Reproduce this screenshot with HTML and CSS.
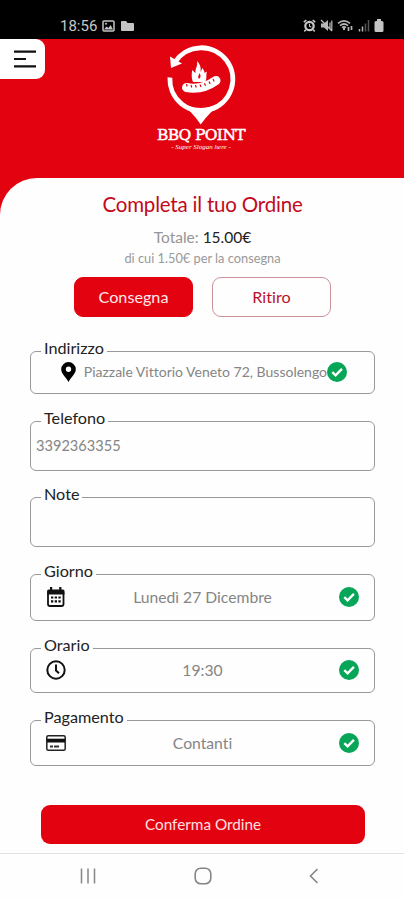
FILE: index.html
```
<!DOCTYPE html>
<html lang="it">
<head>
    <meta charset="UTF-8">
    <meta name="viewport" content="width=device-width, initial-scale=1.0">
    <title>BBQ Point - Completa il tuo Ordine</title>
    <link rel="stylesheet" href="styles.css">
</head>
<body>
    <svg class="symbols" width="0" height="0">
        <symbol id="check" viewBox="0 0 20 20">
            <circle cx="10" cy="10" r="10" fill="#06a557"/>
            <path d="M5.3 10.2l3.3 3.2 6.3-6.5" fill="none" stroke="#fff" stroke-width="2.4"/>
        </symbol>
    </svg>

    <div class="status-bar">
        <span class="clock">18:56</span>
        <svg class="status-image" width="13" height="12" viewBox="0 0 13 12">
            <rect x="1" y="1" width="11" height="10" rx="1" fill="none" stroke="#c4c4c4" stroke-width="1.5"/>
            <path d="M2 9.5l2.5-3 2 1.6 2-3L11 9.5z" fill="#c4c4c4"/>
            <circle cx="4" cy="3.7" r="1" fill="#c4c4c4"/>
        </svg>
        <svg class="status-folder" width="13" height="12" viewBox="0 0 13 12">
            <path d="M0 2q0-1 1-1h4l1.5 2H12q1 0 1 1v6q0 1-1 1H1q-1 0-1-1z" fill="#c4c4c4"/>
        </svg>
        <div class="status-right">
            <svg width="13" height="13" viewBox="0 0 13 13" fill="none" stroke="#c8c8c8">
                <circle cx="6.5" cy="7" r="4.2" stroke-width="2.2"/>
                <path d="M.8 3.2L3.3 1M12.2 3.2L9.7 1M2.8 10.8L1.3 12.4M10.2 10.8l1.5 1.6" stroke-width="1.6"/>
                <path d="M6.5 4.7V7.3l1.8 1" stroke-width="1.1"/>
            </svg>
            <svg width="13" height="13" viewBox="0 0 13 13">
                <path d="M1 4.5h3L8 1v11L4 8.5H1z" fill="#b5b5b5"/>
                <path d="M1 1l11 11M10 3.5v6M11.8 1.5v10" stroke="#c0c0c0" stroke-width="1.2"/>
            </svg>
            <svg width="17" height="13" viewBox="0 0 17 13" fill="none" stroke="#b5b5b5" stroke-width="1.7">
                <path d="M1 4.3q6-5 12 0M3 6.6q4-3.2 8 0M5 8.7q2-1.6 4 0"/>
                <path d="M7 9v2" stroke-width="2"/>
                <path d="M11.5 8v4M14.5 7v4" stroke-width="1.7"/>
            </svg>
            <svg width="12" height="13" viewBox="0 0 12 13" stroke-width="1.5">
                <path d="M1.5 10v2.5M4.5 7.5v5" stroke="#b5b5b5"/>
                <path d="M7.5 4.5v8M10.5 1v11.5" stroke="#555"/>
            </svg>
            <svg width="10" height="13" viewBox="0 0 10 13">
                <path d="M3 0h4v2h1q1.500 0 1.500 1.500v8Q9.500 13 8 13H2Q.5 13 .5 11.500v-8Q.5 2 2 2h1z" fill="#c4c4c4"/>
            </svg>
        </div>
    </div>

    <div class="hero">
        <button class="menu-button" aria-label="Menu">
            <svg width="22" height="18" viewBox="0 0 22 18" stroke="#111" stroke-width="2.2">
                <path d="M0 1.700h22M0 9h12M0 16.300h22"/>
            </svg>
        </button>
        <div class="logo">
            <svg width="72" height="82" viewBox="0 0 72 82">
                <!-- pin outline ending in an arrow -->
                <path d="M10 18A31.500 31.500 0 1 1 4.900 33.500" fill="none" stroke="#fff" stroke-width="4.800"/>
                <path d="M12 56Q35 72 60.500 56Q46 66 35.700 80.500Q26 66 12 56z" fill="#fff"/>
                <path d="M5 12.500L6 24l11-4.500z" fill="#fff"/>
                <!-- flame -->
                <path d="M28 38c-2-5-1-8-1-12l3.500 3c-.5-5 2.500-6 1.500-12 4 4 4 8 3.500 11l2-4c1 2 2 3 2 5l2.500-1.500c-1.500 4 .5 7-2 10.500z" fill="#fff"/>
                <path d="M34 35c-2-3 .5-4 .5-6 1.500 2.500 1.500 4-.5 6z" fill="#e30210"/>
                <!-- sausage -->
                <path d="M21.500 43.500Q37 46.500 51 36.500" fill="none" stroke="#fff" stroke-width="9" stroke-linecap="round"/>
                <path d="M21.500 40l.7 2.500M26 41l.7 2.500M30.500 41l.7 2.500M35 40.500l1 2.500M39.500 39.300l1 2.500M44 37.500l1.200 2.500M48 35l1.200 2.500" stroke="#e30210" stroke-width="1.200"/>
            </svg>
            <div class="logo-name">BBQ POINT</div>
            <div class="logo-slogan">- Super Slogan here -</div>
        </div>
    </div>

    <div class="sheet">
        <h1>Completa il tuo Ordine</h1>
        <p class="total">Totale: <b>15.00€</b></p>
        <p class="delivery">di cui 1.50€ per la consegna</p>

        <div class="mode-buttons">
            <button class="mode active">Consegna</button>
            <button class="mode">Ritiro</button>
        </div>

        <fieldset class="address">
            <legend>Indirizzo</legend>
            <div class="row">
                <svg width="15" height="20" viewBox="0 0 15 20">
                    <path d="M7.500 0A7.300 7.300 0 0 0 .2 7.300C.2 11.500 4 14 7.500 20 11 14 14.800 11.500 14.800 7.300A7.300 7.300 0 0 0 7.500 0zm0 4.600a2.700 2.700 0 1 1 0 5.400 2.700 2.700 0 0 1 0-5.400z" fill="#000" fill-rule="evenodd"/>
                </svg>
                <span class="value">Piazzale Vittorio Veneto 72, Bussolengo</span>
                <svg class="check"><use href="#check"/></svg>
            </div>
        </fieldset>

        <fieldset class="phone">
            <legend>Telefono</legend>
            <div class="row"><span class="value">3392363355</span></div>
        </fieldset>

        <fieldset class="note">
            <legend>Note</legend>
            <div class="row"></div>
        </fieldset>

        <fieldset class="day">
            <legend>Giorno</legend>
            <div class="row">
                <svg width="20" height="20" viewBox="0 0 20 20">
                    <path d="M2 5.500V17q0 2 2 2h11.500q2 0 2-2V5.500" fill="none" stroke="#111" stroke-width="1.800"/>
                    <path d="M1.100 7.500V4q0-1.500 1.500-1.500H4V0h2.200v2.500h7V0h2.200v2.500H17q1.500 0 1.500 1.500v3.500z" fill="#111"/>
                    <path d="M5 10.500h2.300M8.700 10.500H11M12.400 10.500h2.300M5 14.300h2.300M8.700 14.300H11M12.400 14.300h2.300" stroke="#111" stroke-width="2.200"/>
                </svg>
                <span class="value">Lunedì 27 Dicembre</span>
                <svg class="check"><use href="#check"/></svg>
            </div>
        </fieldset>

        <fieldset class="time">
            <legend>Orario</legend>
            <div class="row">
                <svg width="20" height="20" viewBox="0 0 20 20" fill="none" stroke="#111" stroke-width="2">
                    <circle cx="10" cy="10" r="8.700"/>
                    <path d="M10 4.500V10.500l3 2.800"/>
                </svg>
                <span class="value">19:30</span>
                <svg class="check"><use href="#check"/></svg>
            </div>
        </fieldset>

        <fieldset class="payment">
            <legend>Pagamento</legend>
            <div class="row">
                <svg width="20" height="16" viewBox="0 0 20 16">
                    <rect x=".8" y=".8" width="18.400" height="14.400" rx="1.500" fill="none" stroke="#222" stroke-width="1.500"/>
                    <path d="M1 5.600h18" stroke="#111" stroke-width="3.800"/>
                    <path d="M4 11.500h3M8 11.500h5" stroke="#333" stroke-width="1.800"/>
                </svg>
                <span class="value">Contanti</span>
                <svg class="check"><use href="#check"/></svg>
            </div>
        </fieldset>

        <button class="confirm">Conferma Ordine</button>
    </div>

    <div class="nav-bar">
        <svg width="16" height="16" viewBox="0 0 16 16" stroke="#858585" stroke-width="1.500">
            <path d="M1.500 0.500v15M8 .5v15M14.500 .5v15"/>
        </svg>
        <svg width="18" height="18" viewBox="0 0 18 18">
            <rect x="1.200" y="1.200" width="15.600" height="15.600" rx="5.500" fill="none" stroke="#858585" stroke-width="1.600"/>
        </svg>
        <svg width="10" height="16" viewBox="0 0 10 16">
            <path d="M8.500 1L1.500 8l7 7" fill="none" stroke="#858585" stroke-width="1.600"/>
        </svg>
    </div>
</body>
</html>
```
FILE: styles.css
```
* {
    box-sizing: border-box;
}

body {
    margin: 0;
    height: 900px;
    overflow: hidden;
    display: flex;
    flex-direction: column;
    background: #e30210;
    font-family: Lato, "Liberation Sans", sans-serif;
    font-variant-ligatures: none;
}

button {
    font-family: inherit;
    font-variant-ligatures: none;
    padding: 0;
    border: none;
}

svg {
    flex-shrink: 0;
}

.symbols {
    display: none;
}

.status-bar {
    height: 39px;
    flex-shrink: 0;
    background: #000;
    padding: 12px 20px 0 60px;
    display: flex;
    align-items: center;
}

.clock {
    width: 42px;
    color: #c8c8c8;
    font-family: Roboto, sans-serif;
    font-size: 15px;
}

.status-folder {
    margin-left: 6px;
}

.status-right {
    display: flex;
    gap: 4px;
    margin-left: auto;
}

.hero {
    height: 139px;
    flex-shrink: 0;
    display: flex;
    align-items: flex-start;
}

.menu-button {
    width: 45px;
    height: 40px;
    margin-right: 110px;
    padding: 0 9px 0 14px;
    background: #fff;
    border-radius: 0 9px 9px 0;
    display: flex;
    align-items: center;
}

.logo {
    width: 92px;
    padding-top: 5px;
    display: flex;
    flex-direction: column;
    align-items: center;
    color: #fff;
}

.logo-name {
    font-family: "DejaVu Serif", serif;
    font-size: 15.5px;
    line-height: 18px;
    letter-spacing: -0.6px;
    white-space: nowrap;
    -webkit-text-stroke: 0.5px #fff;
}

.logo-slogan {
    font-family: "Liberation Serif", serif;
    font-size: 7px;
    line-height: 6px;
    font-style: italic;
    white-space: nowrap;
}

.sheet {
    flex: 1;
    background: #fefefe;
    border-top-left-radius: 37px;
    padding: 13px 29px 0 30px;
    display: flex;
    flex-direction: column;
}

h1 {
    margin: 0;
    font-size: 20.5px;
    line-height: 26px;
    font-weight: normal;
    letter-spacing: -0.2px;
    text-align: center;
    color: #c20a1c;
}

.total {
    margin: 10px 0 0;
    font-size: 15.5px;
    line-height: 20px;
    text-align: center;
    color: #959595;
}

.total b {
    font-weight: normal;
    color: #222;
}

.delivery {
    margin: 3px 0 0;
    font-size: 12.8px;
    line-height: 16px;
    text-align: center;
    color: #999;
}

.mode-buttons {
    display: flex;
    justify-content: center;
    gap: 19px;
    margin: 11px 0 24px;
}

.mode {
    width: 119px;
    height: 40px;
    padding-bottom: 1px;
    border: 1px solid #c9929a;
    border-radius: 9px;
    background: #fefefe;
    color: #b9122a;
    font-size: 16.2px;
}

.mode.active {
    background: #e30210;
    border-color: #e30210;
    color: #ffe9ea;
}

fieldset {
    width: 345px;
    margin: 0;
    padding: 0;
    border: 1px solid #999;
    border-radius: 6px;
}

legend {
    height: 20px;
    margin-left: 10px;
    padding: 0 3px;
    font-size: 16.2px;
    line-height: 14px;
    color: #222;
}

.row {
    display: flex;
    align-items: center;
    padding: 0 15px;
}

.value {
    flex: 1;
    text-align: center;
    font-size: 15.7px;
    color: #858585;
}

.check {
    width: 20px;
    height: 20px;
}

.address {
    height: 53px;
    margin-bottom: 17px;
}

.address .row {
    height: 22px;
    padding: 0 27px 0 30px;
}

.address .value {
    padding-bottom: 2px;
    font-size: 14px;
    text-align: right;
    white-space: nowrap;
}

.phone {
    height: 60px;
    margin-bottom: 16px;
}

.phone .row {
    height: 30px;
    padding: 0 5px;
}

.phone .value {
    padding-bottom: 1px;
    text-align: left;
    font-size: 14.6px;
}

.note {
    height: 60px;
    margin-bottom: 17px;
}

.day {
    height: 57px;
    margin-bottom: 17px;
}

.day .row,
.payment .row {
    height: 26px;
}

.time {
    height: 55px;
    margin-bottom: 17px;
}

.time .row {
    height: 24px;
}

.payment {
    height: 56px;
}

.confirm {
    width: 324px;
    height: 39px;
    margin: 39px 0 0 11px;
    padding-bottom: 1px;
    flex-shrink: 0;
    border-radius: 9px;
    background: #e30210;
    color: #ffe0e2;
    font-size: 15.3px;
}

.nav-bar {
    height: 47px;
    flex-shrink: 0;
    border-top: 1px solid #e4e2e0;
    background: #fefefe;
    padding: 0 85px 2px 80px;
    display: flex;
    align-items: center;
    justify-content: space-between;
}
```
